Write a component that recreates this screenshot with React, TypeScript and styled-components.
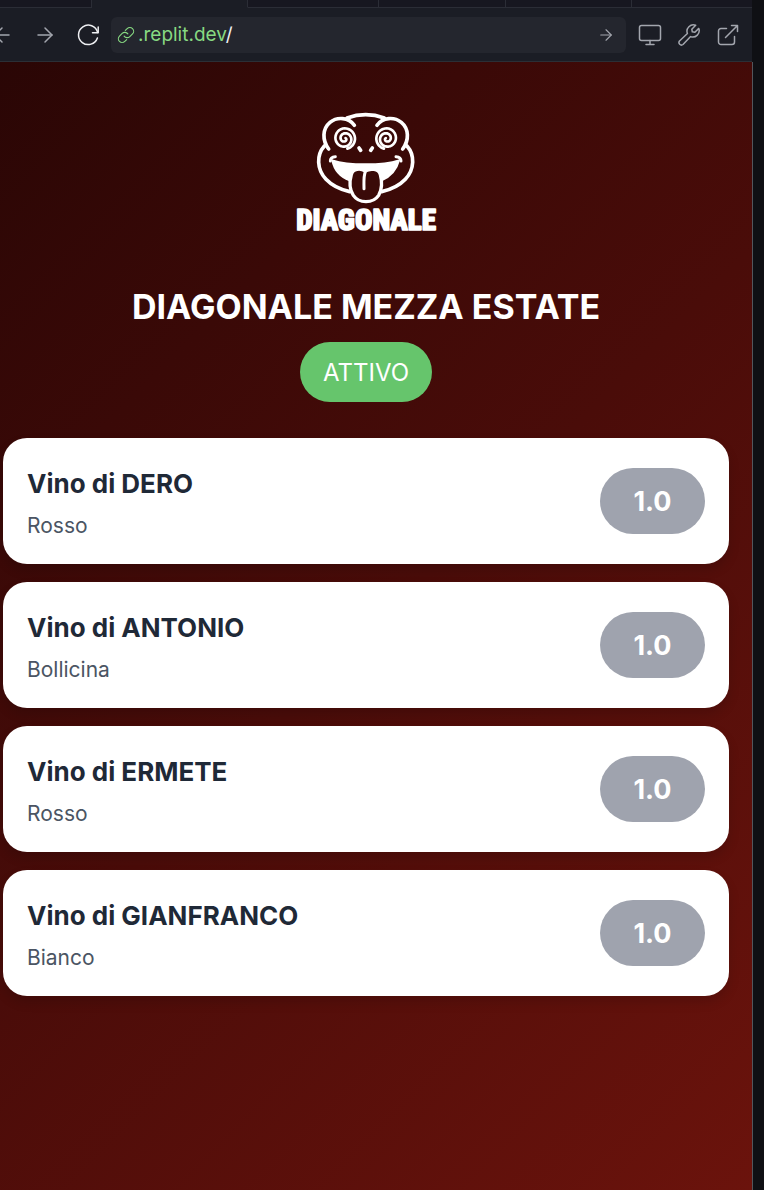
import React from "react";
import styled, { createGlobalStyle } from "styled-components";
import { ArrowLeft, ArrowRight } from "lucide-react";

const GlobalStyle = createGlobalStyle`
  *, *::before, *::after { box-sizing: border-box; }
  body {
    margin: 0;
    background: #0f1014;
    font-family: Inter, "Liberation Sans", sans-serif;
  }
  button { font: inherit; border: 0; padding: 0; background: none; cursor: pointer; }
  h1, h2, p, ul { margin: 0; padding: 0; }
`;

const Workspace = styled.div`
  min-height: 100vh;
  display: flex;
  flex-direction: column;
  padding-right: 11px;
`;

const TabStrip = styled.div`
  display: grid;
  grid-template-columns: 92px 156px 131px 127px 126px 1fr;
  height: 8px;
  margin-right: 1px;
`;

const Tab = styled.div<{ $active?: boolean }>`
  background: ${(p) => (p.$active ? "#1b1d25" : "#171720")};
  border-right: 1px solid #2b2d36;
  border-bottom: 1px solid ${(p) => (p.$active ? "#1b1d25" : "#2b2d36")};
  &:last-child { border-right: 0; }
`;

const Toolbar = styled.header`
  display: flex;
  align-items: center;
  height: 54px;
  margin-right: 1px;
  padding-right: 12px;
  background: #1b1d25;
  border-bottom: 1px solid #2b2f36;
`;

const NavGroup = styled.nav`
  display: flex;
  align-items: center;
  gap: 19px;
  margin-left: -10px;
  padding-right: 11px;
`;

const IconButton = styled.button<{ $bright?: boolean }>`
  display: flex;
  align-items: center;
  justify-content: center;
  width: 24px;
  height: 24px;
  color: ${(p) => (p.$bright ? "#eeeff2" : "#a3a6ae")};
`;

const AddressBar = styled.form`
  flex: 1;
  min-width: 0;
  display: flex;
  align-items: center;
  height: 36px;
  padding: 0 8px 0 6px;
  border-radius: 6px;
  background: #24262e;
`;

const Address = styled.a`
  flex: 1;
  display: flex;
  align-items: center;
  gap: 3px;
  color: #87d982;
  font-size: 19px;
  line-height: 26px;
  text-decoration: none;
`;

const Path = styled.span`
  color: #f1f2f4;
`;

const ToolGroup = styled.div`
  display: flex;
  gap: 15px;
  padding-left: 12px;
`;

const Preview = styled.main`
  flex: 1;
  display: flex;
  flex-direction: column;
  align-items: center;
  padding: 38px 23px 38px 3px;
  border-right: 1px solid #53565c;
  background: linear-gradient(135deg, #2a0605 0%, #4a0c09 50%, #6b130c 100%);
`;

const Title = styled.h1`
  margin-top: 44px;
  color: #fff;
  font-size: 34px;
  line-height: 46px;
  font-weight: 700;
  text-align: center;
`;

const Status = styled.button`
  height: 60px;
  margin-top: 12px;
  padding: 2px 23px 0;
  border-radius: 30px;
  background: #66c56c;
  color: #fff;
  font-size: 24px;
  line-height: 36px;
`;

const WineList = styled.ul`
  align-self: stretch;
  display: flex;
  flex-direction: column;
  gap: 18px;
  margin-top: 36px;
  list-style: none;
`;

const WineCard = styled.li`
  display: flex;
  align-items: center;
  justify-content: space-between;
  height: 126px;
  padding: 0 24px;
  border-radius: 24px;
  background: #fff;
  box-shadow: 0 6px 12px rgba(0, 0, 0, 0.14);
`;

const WineText = styled.div`
  padding-top: 8px;
`;

const WineName = styled.h2`
  color: #1f2937;
  font-size: 26px;
  line-height: 42px;
  font-weight: 700;
`;

const WineType = styled.p`
  color: #4b5563;
  font-size: 21px;
  line-height: 42px;
`;

const Score = styled.button`
  width: 105px;
  height: 66px;
  border-radius: 33px;
  background: #9fa3ae;
  color: #fff;
  font-size: 27px;
  font-weight: 700;
`;

const LogoText = styled.text`
  font-family: "Roboto Condensed", Roboto, "Liberation Sans", sans-serif;
  font-size: 87px;
  font-weight: 800;
`;

/* Spiral that winds outwards, settles on a round rim and ends below the eye. */
const spiral = (cx: number, cy: number, side: 1 | -1) => {
  const steps = 80;
  const turns = 2.3;
  const end = (75 * Math.PI) / 180;
  const points = Array.from({ length: steps + 1 }, (_, i) => {
    const t = (i / steps) * turns;
    const r = Math.min(3 + t * 15.5, 31);
    const angle = end - (turns - t) * 2 * Math.PI;
    return `${(cx + side * r * Math.cos(angle)).toFixed(1)} ${(cy + r * Math.sin(angle)).toFixed(1)}`;
  });
  return `M${points.join("L")}`;
};

const Logo = () => (
  <svg width="160" height="140" viewBox="3 0 480 420" role="img" aria-label="Diagonale" fill="none" stroke="#fff" strokeWidth="11" strokeLinecap="round" strokeLinejoin="round">
    <path d="M186 54 Q242 34 298 54" />
    <path d="M208 76 C191 51 156 50 135 67 C112 86 111 121 131 147" />
    <path d="M276 76 C293 51 328 50 349 67 C372 86 373 121 353 147" />
    <path d="M118 138 C94 165 95 208 123 238 C142 258 166 269 194 275" />
    <path d="M366 138 C390 165 389 208 361 238 C342 258 318 269 290 275" />
    <path d={spiral(179, 116, 1)} strokeWidth="8" />
    <path d={spiral(305, 116, -1)} strokeWidth="8" />
    <path d="M222 144 L227 151 M262 144 L257 151" strokeWidth="11" />
    <path d="M142 181 C190 197 294 197 342 181 C334 212 316 230 290 241 L287 222 C280 207 260 205 246 212 C230 202 205 205 199 224 L194 241 C164 230 148 211 142 181Z" fill="#fff" strokeWidth="6" />
    <path d="M136 183 Q136 171 151 170 M348 183 Q348 171 333 170" strokeWidth="9" />
    <path d="M199 224 C203 205 227 204 240 213 C257 204 281 206 286 224 C292 246 290 270 281 286 C264 311 222 311 205 286 C194 270 193 246 199 224Z" fill="#3a0a08" strokeWidth="10" />
    <path d="M241 215 C235 230 237 248 237 266" strokeWidth="9" />
    <LogoText x="243" y="391" textAnchor="middle" fill="#fff" strokeWidth="5">DIAGONALE</LogoText>
  </svg>
);

const lineIcon = {
  width: 24,
  height: 24,
  viewBox: "0 0 24 24",
  fill: "none",
  stroke: "currentColor",
  strokeWidth: 1.5,
  strokeLinecap: "round" as const,
  strokeLinejoin: "round" as const,
  "aria-hidden": true,
};

const ReloadIcon = () => (
  <svg {...lineIcon}>
    <path d="M21.6 9.4A9.700 9.700 0 1 0 21.400 15" />
    <path d="M22.200 4V9.800H16.500" />
  </svg>
);

const LinkIcon = () => (
  <svg {...lineIcon} width="18" height="18">
    <path d="M9.500 13.500a5 5 0 0 0 7.600.6l3.600-3.600a5 5 0 0 0-7.100-7.100l-2.500 2.500" />
    <path d="M14.500 10.500a5 5 0 0 0-7.600-.6l-3.600 3.600a5 5 0 0 0 7.100 7.100l2.500-2.500" />
  </svg>
);

const MonitorIcon = () => (
  <svg {...lineIcon}>
    <rect x="1.5" y="2.5" width="21" height="15" rx="2" />
    <path d="M12 17.5v4M8 21.5h8" />
  </svg>
);

const WrenchIcon = () => (
  <svg {...lineIcon}>
    <path d="M18.7 2.3a6.4 6.4 0 0 0-8.3 8.2L2.5 18a2.5 2.5 0 0 0 3.5 3.5l7.6-7.9a6.4 6.4 0 0 0 8.2-8.2l-3.9 3.9-2.6-.5-.5-2.6z" />
  </svg>
);

const OpenIcon = () => (
  <svg {...lineIcon}>
    <path d="M10.5 5.5H5A2.5 2.5 0 0 0 2.5 8v11A2.5 2.5 0 0 0 5 21.5h11a2.5 2.5 0 0 0 2.5-2.5v-5.5" />
    <path d="M15.5 2.5h6v6M21.5 2.5L9.5 14.5" />
  </svg>
);

const wines = [
  { name: "Vino di DERO", type: "Rosso", score: "1.0" },
  { name: "Vino di ANTONIO", type: "Bollicina", score: "1.0" },
  { name: "Vino di ERMETE", type: "Rosso", score: "1.0" },
  { name: "Vino di GIANFRANCO", type: "Bianco", score: "1.0" },
];

export default function App() {
  return (
    <>
      <GlobalStyle />
      <Workspace>
        <TabStrip>
          <Tab />
          <Tab $active />
          <Tab />
          <Tab />
          <Tab />
          <Tab />
        </TabStrip>
        <Toolbar>
          <NavGroup>
            <IconButton aria-label="Back"><ArrowLeft size={24} strokeWidth={1.5} /></IconButton>
            <IconButton aria-label="Forward"><ArrowRight size={24} strokeWidth={1.5} /></IconButton>
            <IconButton aria-label="Reload" $bright><ReloadIcon /></IconButton>
          </NavGroup>
          <AddressBar onSubmit={(e) => e.preventDefault()}>
            <Address href="/">
              <LinkIcon />
              <span>.replit.dev<Path>/</Path></span>
            </Address>
            <IconButton aria-label="Go"><ArrowRight size={18} strokeWidth={1.5} /></IconButton>
          </AddressBar>
          <ToolGroup>
            <IconButton aria-label="Devices"><MonitorIcon /></IconButton>
            <IconButton aria-label="Developer tools"><WrenchIcon /></IconButton>
            <IconButton aria-label="Open in new tab"><OpenIcon /></IconButton>
          </ToolGroup>
        </Toolbar>
        <Preview>
          <Logo />
          <Title>DIAGONALE MEZZA ESTATE</Title>
          <Status>ATTIVO</Status>
          <WineList>
            {wines.map((wine) => (
              <WineCard key={wine.name}>
                <WineText>
                  <WineName>{wine.name}</WineName>
                  <WineType>{wine.type}</WineType>
                </WineText>
                <Score>{wine.score}</Score>
              </WineCard>
            ))}
          </WineList>
        </Preview>
      </Workspace>
    </>
  );
}
